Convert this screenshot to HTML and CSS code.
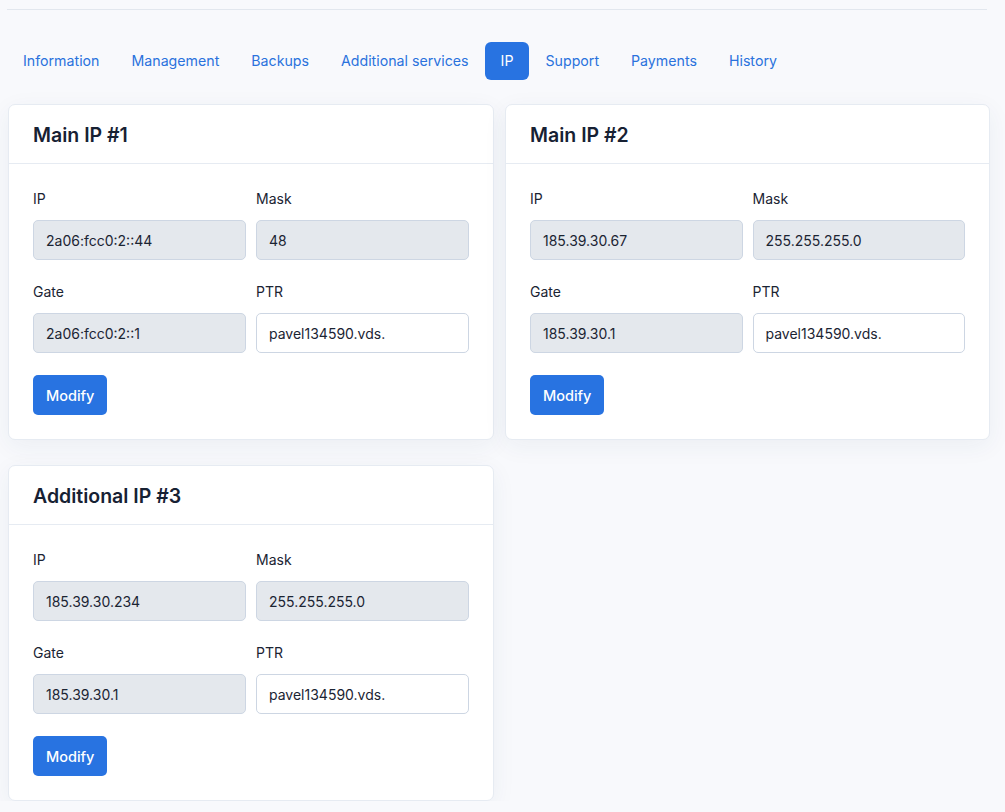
FILE: index.html
```html
<!DOCTYPE html>
<html>
<head>
	<meta charset="utf-8">
	<title>IP</title>
	<link rel="stylesheet" href="styles.css">
</head>
<body>
<div class="page">
	<div class="topline"></div>
	<ul class="tabs">
		<li><a href="#">Information</a></li>
		<li><a href="#">Management</a></li>
		<li><a href="#">Backups</a></li>
		<li><a href="#">Additional services</a></li>
		<li><a href="#" class="active">IP</a></li>
		<li><a href="#">Support</a></li>
		<li><a href="#">Payments</a></li>
		<li><a href="#">History</a></li>
	</ul>

	<div class="cards">
		<div class="card">
			<div class="card-head">Main IP #1</div>
			<div class="card-body">
				<div class="fields">
					<div class="field"><label>IP</label><input type="text" value="2a06:fcc0:2::44" disabled></div>
					<div class="field"><label>Mask</label><input type="text" value="48" disabled></div>
					<div class="field"><label>Gate</label><input type="text" value="2a06:fcc0:2::1" disabled></div>
					<div class="field"><label>PTR</label><input type="text" value="pavel134590.vds."></div>
				</div>
				<button class="btn">Modify</button>
			</div>
		</div>

		<div class="card">
			<div class="card-head">Main IP #2</div>
			<div class="card-body">
				<div class="fields">
					<div class="field"><label>IP</label><input type="text" value="185.39.30.67" disabled></div>
					<div class="field"><label>Mask</label><input type="text" value="255.255.255.0" disabled></div>
					<div class="field"><label>Gate</label><input type="text" value="185.39.30.1" disabled></div>
					<div class="field"><label>PTR</label><input type="text" value="pavel134590.vds."></div>
				</div>
				<button class="btn">Modify</button>
			</div>
		</div>

		<div class="card">
			<div class="card-head">Additional IP #3</div>
			<div class="card-body">
				<div class="fields">
					<div class="field"><label>IP</label><input type="text" value="185.39.30.234" disabled></div>
					<div class="field"><label>Mask</label><input type="text" value="255.255.255.0" disabled></div>
					<div class="field"><label>Gate</label><input type="text" value="185.39.30.1" disabled></div>
					<div class="field"><label>PTR</label><input type="text" value="pavel134590.vds."></div>
				</div>
				<button class="btn">Modify</button>
			</div>
		</div>
	</div>
</div>
</body>
</html>
```

FILE: styles.css
```css
*{
	margin: 0;
	padding: 0;
	box-sizing: border-box;
}
body{
	background: #f8f9fc;
	font-family: "Inter", "Lato", sans-serif;
	color: #1b2433;
	font-size: 14px;
}
.page{
	width: 989px;
	padding-left: 7px;
	padding-top: 9px;
}
.topline{
	height: 1px;
	background: #e2e7ee;
	margin-right: 2px;
}

.tabs{
	list-style: none;
	display: flex;
	margin-top: 32px;
	margin-bottom: 24px;
}
.tabs a{
	display: block;
	height: 38px;
	line-height: 38px;
	padding: 0 16px;
	border-radius: 6px;
	color: #2a72dd;
	text-decoration: none;
	font-size: 14.2px;
}
.tabs a.active{
	background: #2873e1;
	color: #fff;
}

.cards{
	display: grid;
	grid-template-columns: 486px 485px;
	column-gap: 11px;
	row-gap: 25px;
	padding-left: 1px;
	align-items: start;
}
.card{
	background: #fff;
	border: 1px solid #e6ebf2;
	border-radius: 7px;
	box-shadow: 0 6px 24px rgba(40, 60, 100, 0.06);
}
.card-head{
	height: 59px;
	line-height: 60px;
	padding: 0 24px;
	font-size: 19.5px;
	font-weight: 600;
	border-bottom: 1px solid #e6ebf2;
	color: #172133;
}
.card-body{
	padding: 25px 24px 24px 24px;
}
.fields{
	display: grid;
	grid-template-columns: 1fr 1fr;
	column-gap: 10px;
	row-gap: 22px;
	margin-bottom: 22px;
}
.field label{
	display: block;
	font-size: 14px;
	line-height: 20px;
	margin-bottom: 11px;
	color: #1b2433;
}
.field input{
	display: block;
	width: 100%;
	height: 40px;
	border: 1px solid #cdd6e3;
	border-radius: 5px;
	padding: 0 12px;
	font-family: inherit;
	font-size: 14px;
	color: #1b2433;
	background: #fff;
}
.field input:disabled{
	background: #e4e8ed;
	color: #1b2433;
}
.btn{
	display: block;
	height: 40px;
	padding: 0 13px;
	border: none;
	border-radius: 5px;
	background: #2873e1;
	color: #fff;
	font-family: inherit;
	font-size: 14.5px;
	font-weight: 500;
}
```
